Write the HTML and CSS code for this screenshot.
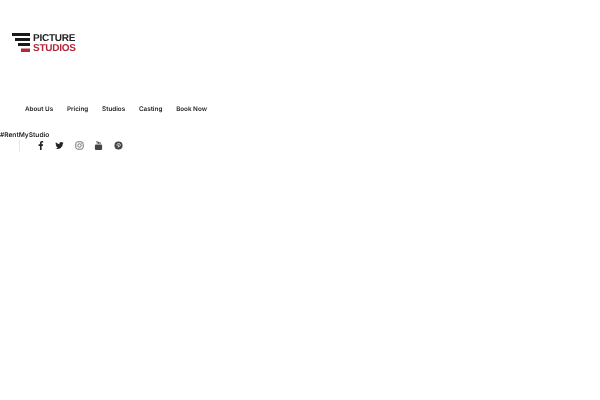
FILE: index.html
```html
<!DOCTYPE html>
<html lang="en">
<head>
<meta charset="utf-8">
<title>Picture Studios</title>
<link rel="stylesheet" href="styles.css">
</head>
<body>
<header class="header">
  <a class="logo" href="#">
    <svg class="logo-mark" width="20" height="21" viewBox="0 0 20 21" aria-hidden="true">
      <rect x="0" y="1" width="18" height="3" fill="#1a1a1a"/>
      <rect x="3" y="6" width="15" height="3" fill="#1a1a1a"/>
      <rect x="6" y="11" width="12" height="3" fill="#1a1a1a"/>
      <rect x="9" y="16.500" width="9" height="3.500" fill="#b3283c"/>
    </svg>
    <span class="logo-text"><span class="logo-top">PICTURE</span><span class="logo-bottom">STUDIOS</span></span>
  </a>
  <nav class="nav">
    <a href="#">About Us</a>
    <a href="#">Pricing</a>
    <a href="#">Studios</a>
    <a href="#">Casting</a>
    <a href="#">Book Now</a>
  </nav>
  <div class="tag">#RentMyStudio</div>
  <div class="social">
    <span class="divider"></span>
    <svg class="icon" width="9" height="9" viewBox="0 0 10 10" aria-hidden="true"><path d="M6.200 10V5.500h1.400l.3-1.800H6.200V2.700c0-.5.2-.9.9-.9H8V.2C7.800.1 7.300 0 6.700 0 5.300 0 4.400.8 4.400 2.400v1.300H2.900v1.800h1.500V10z" fill="#222"/></svg>
    <svg class="icon icon-tw" width="9" height="9" viewBox="0 0 24 24" aria-hidden="true"><path d="M23 4.900c-.8.400-1.700.6-2.600.7.900-.6 1.600-1.400 2-2.500-.9.500-1.900.9-2.900 1.100A4.600 4.600 0 0 0 11.700 8.400 13 13 0 0 1 2.300 3.600a4.600 4.600 0 0 0 1.400 6.100c-.7 0-1.400-.2-2-.6v.1c0 2.200 1.600 4.100 3.700 4.500-.7.200-1.400.2-2.100.1.600 1.800 2.300 3.100 4.300 3.200A9.200 9.200 0 0 1 .8 18.900 13 13 0 0 0 20.800 7.300c.9-.6 1.600-1.400 2.200-2.400z" fill="#222"/></svg>
    <svg class="icon" width="9" height="9" viewBox="0 0 10 10" aria-hidden="true"><rect x=".9" y=".9" width="8.200" height="8.200" rx="2.300" fill="none" stroke="#555" stroke-width=".9"/><circle cx="5" cy="5" r="1.900" fill="none" stroke="#555" stroke-width=".9"/><circle cx="7.500" cy="2.500" r=".55" fill="#555"/></svg>
    <svg class="icon" width="9" height="9" viewBox="0 0 10 10" aria-hidden="true"><path d="M2.300 0l.8 2v1.300h.6V2L4.500 0h-.6L3.400 1.300 3 0zM5 .9c-.5 0-.7.300-.7.700v1c0 .5.200.8.700.8s.7-.3.700-.8v-1c0-.4-.2-.7-.7-.7zM6.100 1v2c0 .3.200.4.400.4s.4-.1.600-.3v.3h.5V1h-.5v1.800c-.2.200-.5.200-.5 0V1z" fill="#444"/><rect x="1" y="4" width="8" height="6" rx="1.200" fill="#444"/></svg>
    <svg class="icon icon-pin" width="9" height="9" viewBox="0 0 10 10" aria-hidden="true"><circle cx="5" cy="5" r="4.500" fill="#444"/><path d="M4.500 7.300l.9-3.500M3.500 5.300c-.7-1.500.4-2.600 1.700-2.600 1.300 0 2 .9 1.800 2-.2 1.200-1.200 1.800-2 1.200" fill="none" stroke="#fff" stroke-width=".8"/></svg>
  </div>
</header>
</body>
</html>
```
FILE: styles.css
```css
* { box-sizing: border-box; }
html, body { margin: 0; background: #fff; }
body {
  width: 600px;
  height: 400px;
  overflow: hidden;
  font-family: Inter, "Liberation Sans", sans-serif;
  color: #222;
  text-rendering: geometricPrecision;
}
a { color: inherit; text-decoration: none; }
.header { display: flex; flex-direction: column; align-items: flex-start; padding-top: 32px; will-change: transform; }
.logo { display: flex; align-items: flex-start; gap: 1px; margin-left: 12px; height: 21px; }
.logo-mark { display: block; flex: none; }
.logo-text {
  display: flex;
  flex-direction: column;
  font-family: "Liberation Sans", Arial, sans-serif;
  font-weight: 700;
  font-size: 10px;
  line-height: 9.500px;
  letter-spacing: -.25px;
  margin-top: 2px;
}
.logo-bottom { color: #b3283c; }
.nav {
  display: flex;
  gap: 13.800px;
  margin: 51px 0 0 25px;
  font-size: 6.300px;
  font-weight: 600;
  line-height: 10px;
}
.tag { margin-top: 16px; font-size: 6.600px; font-weight: 600; line-height: 10px; }
.social { display: flex; align-items: center; margin-top: 0; height: 12px; }
.divider { width: 1px; height: 12px; margin-left: 19px; margin-right: 15.800px; background: #e8e8e8; }
.icon { display: block; flex: none; margin-bottom: 2px; margin-right: 10.400px; }
.icon-tw { margin-right: 11px; margin-left: -.6px; }
.icon-pin { margin-left: .6px; }
```
